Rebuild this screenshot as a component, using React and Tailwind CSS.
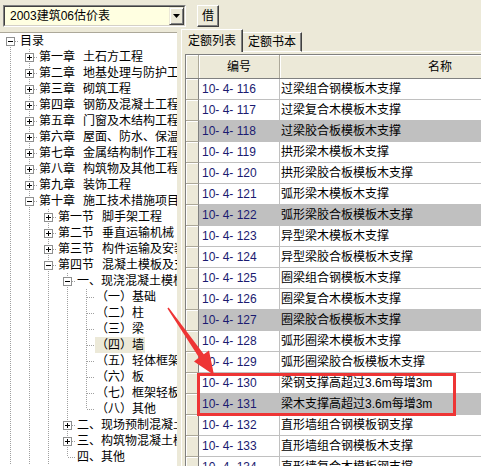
import React from 'react';

const FONT = "[font-family:'Liberation_Sans','Noto_Sans_CJK_SC',sans-serif]";

const treeItems = [
  { l: 0, t: '目录', box: '-', more: true },
  { l: 1, t: ['第一章', '土石方工程'], box: '+' },
  { l: 1, t: ['第二章', '地基处理与防护工程'], box: '+' },
  { l: 1, t: ['第三章', '砌筑工程'], box: '+' },
  { l: 1, t: ['第四章', '钢筋及混凝土工程'], box: '+' },
  { l: 1, t: ['第五章', '门窗及木结构工程'], box: '+' },
  { l: 1, t: ['第六章', '屋面、防水、保温及防腐工程'], box: '+' },
  { l: 1, t: ['第七章', '金属结构制作工程'], box: '+' },
  { l: 1, t: ['第八章', '构筑物及其他工程'], box: '+' },
  { l: 1, t: ['第九章', '装饰工程'], box: '+' },
  { l: 1, t: ['第十章', '施工技术措施项目'], box: '-', more: true },
  { l: 2, t: ['第一节', '脚手架工程'], box: '+' },
  { l: 2, t: ['第二节', '垂直运输机械'], box: '+' },
  { l: 2, t: ['第三节', '构件运输及安装'], box: '+' },
  { l: 2, t: ['第四节', '混凝土模板及支架'], box: '-', more: true },
  { l: 3, t: '一、现浇混凝土模板及支架', box: '-' },
  { l: 4, t: '（一）基础' },
  { l: 4, t: '（二）柱' },
  { l: 4, t: '（三）梁' },
  { l: 4, t: '（四）墙', sel: true },
  { l: 4, t: '（五）轻体框架' },
  { l: 4, t: '（六）板' },
  { l: 4, t: '（七）框架轻板' },
  { l: 4, t: '（八）其他' },
  { l: 3, t: '二、现场预制混凝土模板', box: '+' },
  { l: 3, t: '三、构筑物混凝土模板', box: '+' },
  { l: 3, t: '四、其他' },
];

const rows = [
  ['10- 4- 116', '过梁组合钢模板木支撑'],
  ['10- 4- 117', '过梁复合木模板木支撑'],
  ['10- 4- 118', '过梁胶合板模板木支撑', true],
  ['10- 4- 119', '拱形梁木模板木支撑'],
  ['10- 4- 120', '拱形梁胶合板模板木支撑'],
  ['10- 4- 121', '弧形梁木模板木支撑'],
  ['10- 4- 122', '弧形梁胶合板模板木支撑', true],
  ['10- 4- 123', '异型梁木模板木支撑'],
  ['10- 4- 124', '异型梁胶合板模板木支撑'],
  ['10- 4- 125', '圈梁组合钢模板木支撑'],
  ['10- 4- 126', '圈梁复合木模板木支撑'],
  ['10- 4- 127', '圈梁胶合板模板木支撑', true],
  ['10- 4- 128', '弧形圈梁木模板木支撑'],
  ['10- 4- 129', '弧形圈梁胶合板模板木支撑'],
  ['10- 4- 130', '梁钢支撑高超过3.6m每增3m'],
  ['10- 4- 131', '梁木支撑高超过3.6m每增3m', true],
  ['10- 4- 132', '直形墙组合钢模板钢支撑'],
  ['10- 4- 133', '直形墙组合钢模板木支撑'],
  ['10- 4- 134', '直形墙复合木模板钢支撑'],
];

const cx = (l) => 10 + 19 * l;

function hasNext(i) {
  for (let j = i + 1; j < treeItems.length; j++) {
    if (treeItems[j].l < treeItems[i].l) return false;
    if (treeItems[j].l === treeItems[i].l) return true;
  }
  return !!treeItems[i].more;
}

function railsFor(i) {
  const out = [];
  for (let a = 0; a < treeItems[i].l; a++) {
    let j = i - 1;
    while (j >= 0 && treeItems[j].l !== a) j--;
    if (j >= 0 && hasNext(j)) out.push(a);
  }
  return out;
}

const DOT = { stroke: '#a0a0a0', strokeDasharray: '1 1' };

function TreeRow({ item, index }) {
  const c = cx(item.l);
  const w = c + 9;
  const next = hasNext(index);
  return (
    <div className="flex h-[16px] items-center whitespace-nowrap">
      <svg width={w} height="16" className="shrink-0">
        {railsFor(index).map((a) => (
          <line key={a} x1={cx(a) + 0.5} y1="0" x2={cx(a) + 0.5} y2="16" {...DOT} />
        ))}
        {index > 0 && <line x1={c + 0.5} y1="0" x2={c + 0.5} y2="8" {...DOT} />}
        {next && <line x1={c + 0.5} y1="8" x2={c + 0.5} y2="16" {...DOT} />}
        <line x1={c + 1} y1="8.5" x2={w} y2="8.5" {...DOT} />
        {item.box && (
          <g>
            <rect x={c - 3.5} y="4.5" width="8" height="8" fill="#fff" stroke="#8e8f8f" />
            <line x1={c - 2} y1="8.5" x2={c + 3} y2="8.5" stroke="#000" />
            {item.box === '+' && <line x1={c + 0.5} y1="6" x2={c + 0.5} y2="11" stroke="#000" />}
          </g>
        )}
      </svg>
      <span className={`px-[1px] leading-[16px] ${item.sel ? 'bg-[#ece9d8]' : ''}`}>
        {Array.isArray(item.t) ? (
          <>
            {item.t[0]}
            <span className="ml-[8px]">{item.t[1]}</span>
          </>
        ) : (
          item.t
        )}
      </span>
    </div>
  );
}

function Arrow() {
  return (
    <svg className="pointer-events-none absolute left-0 top-0" width="481" height="466">
      <polygon
        points="168.6,307.6 203.8,354.3 209,350.6 214,375 194,361.4 199,357.6 167.4,308.4"
        fill="#ee3535"
      />
    </svg>
  );
}

export default function App() {
  return (
    <div className={`relative h-[466px] w-[481px] overflow-hidden bg-[#ece9d8] text-[12px] text-black ${FONT}`}>
      {/* top bar */}
      <div className="flex h-[29px] items-start pl-[3px] pt-[5px]">
        <div className="flex h-[22px] w-[183px] border border-t-[#808080] border-l-[#808080] border-b-white border-r-white">
          <div className="flex flex-1 border border-t-[#404040] border-l-[#404040] border-b-[#d4d0c8] border-r-[#d4d0c8] bg-[#ffffe1]">
            <div className="flex flex-1 items-center pl-[5px]">2003建筑06估价表</div>
            <div className="flex w-[15px] items-center justify-center border border-t-[#ece9d8] border-l-[#ece9d8] border-b-[#404040] border-r-[#404040] bg-[#ece9d8] shadow-[inset_1px_1px_0_#fff,inset_-1px_-1px_0_#808080]">
              <svg width="7" height="4">
                <polygon points="0,0 7,0 3.5,4" fill="#000" />
              </svg>
            </div>
          </div>
        </div>
        <div className="ml-[11px] flex h-[22px] w-[22px] items-center justify-center border border-t-white border-l-white border-b-[#404040] border-r-[#404040] shadow-[inset_-1px_-1px_0_#808080]">
          借
        </div>
      </div>

      <div className="flex">
        {/* tree */}
        <div className="mt-[3px] h-[434px] w-[177px] shrink-0 overflow-hidden border-t border-[#aca899] bg-white">
          {treeItems.map((it, i) => (
            <TreeRow key={i} item={it} index={i} />
          ))}
        </div>

        {/* right pane */}
        <div className="ml-[4px] flex min-w-0 flex-1 flex-col">
          <div className="flex h-[23px] items-end">
            <div className="flex h-[23px] w-[62px] items-center justify-center border-t border-l border-r border-t-white border-l-white border-r-[#404040] shadow-[inset_-1px_0_0_#808080]">
              定额列表
            </div>
            <div className="flex h-[20px] w-[59px] items-center justify-center border-t border-r border-b border-t-white border-r-[#404040] border-b-white shadow-[inset_-1px_0_0_#808080]">
              定额书本
            </div>
            <div className="h-[20px] flex-1 border-b border-white" />
          </div>
          <div className="flex-1 border-l border-white pl-[3px] pt-[2px]">
            <div className="w-[420px] border-t border-l border-[#808080]">
              {/* header */}
              <div className="flex h-[24px] border-b border-[#808080] bg-[#ece9d8]">
                <div className="w-[13px] border-r border-[#aca899] shadow-[inset_1px_1px_0_#fff]" />
                <div className="flex w-[81px] items-center justify-center border-r border-[#aca899] shadow-[inset_1px_1px_0_#fff]">
                  编号
                </div>
                <div className="flex w-[320px] items-center justify-center shadow-[inset_1px_1px_0_#fff]">
                  名称
                </div>
              </div>
              {rows.map(([code, name, gray]) => (
                <div key={code} className="flex h-[21px]">
                  <div className="w-[13px] border-r border-b border-r-[#808080] border-b-[#aca899] bg-[#ece9d8] shadow-[inset_1px_1px_0_#fff]" />
                  <div
                    className={`flex w-[81px] items-center border-r border-b border-[#c0c0c0] pl-[3px] text-[#1a1a70] ${
                      gray ? 'bg-[#c0c0c0]' : 'bg-white'
                    }`}
                  >
                    {code}
                  </div>
                  <div
                    className={`flex w-[320px] items-center border-b border-[#c0c0c0] pl-[1px] ${
                      gray ? 'bg-[#c0c0c0]' : 'bg-white'
                    }`}
                  >
                    {name}
                  </div>
                </div>
              ))}
            </div>
          </div>
        </div>
      </div>

      {/* annotation */}
      <div className="pointer-events-none absolute left-[197px] top-[373px] h-[43px] w-[259px] border-[3px] border-[#ee3535]" />
      <Arrow />
    </div>
  );
}
